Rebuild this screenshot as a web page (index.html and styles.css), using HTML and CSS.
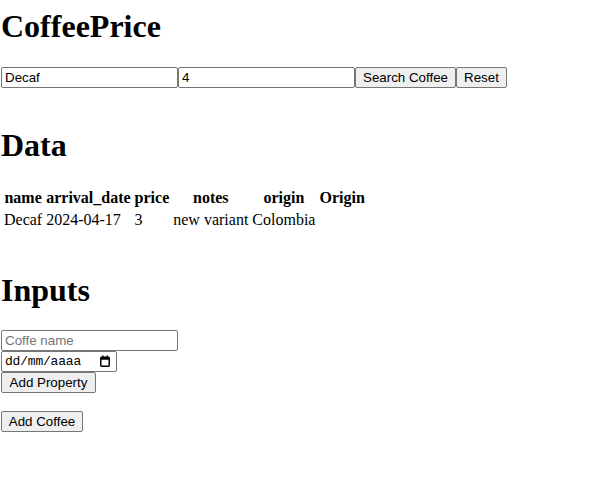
FILE: index.html
```html
<!DOCTYPE html>
<html lang="en">
<head>
<meta charset="utf-8">
<title>CoffeePrice</title>
<link rel="stylesheet" href="styles.css">
</head>
<body>
<div class="app">
  <section class="section section-search">
    <h1 class="title first">CoffeePrice</h1>
    <form class="search-row">
      <input class="text-input" type="text" value="Decaf">
      <input class="text-input" type="text" value="4">
      <button class="btn btn-search" type="button">Search Coffee</button>
      <button class="btn btn-reset" type="button">Reset</button>
    </form>
  </section>

  <section class="section">
    <h1 class="title">Data</h1>
    <table class="data-table">
      <thead>
        <tr>
          <th>name</th>
          <th>arrival_date</th>
          <th>price</th>
          <th>notes</th>
          <th>origin</th>
          <th>Origin</th>
        </tr>
      </thead>
      <tbody>
        <tr>
          <td>Decaf</td>
          <td>2024-04-17</td>
          <td>3</td>
          <td>new variant</td>
          <td>Colombia</td>
          <td></td>
        </tr>
      </tbody>
    </table>
  </section>

  <section class="section">
    <h1 class="title">Inputs</h1>
    <div class="input-stack">
      <input class="text-input" type="text" placeholder="Coffe name">
      <div class="date-input">
        <span class="date-text">dd/mm/aaaa</span>
        <svg class="cal-icon" width="10" height="12" viewBox="0 0 10 12" aria-hidden="true">
          <rect x="0.75" y="2.25" width="8.5" height="9" rx="1" fill="none" stroke="#000" stroke-width="1.5"/>
          <rect x="0.75" y="2.25" width="8.5" height="2.5" fill="#000"/>
          <rect x="2" y="0.5" width="1.5" height="2.5" fill="#000"/>
          <rect x="6.5" y="0.5" width="1.5" height="2.5" fill="#000"/>
        </svg>
      </div>
      <button class="btn btn-prop" type="button">Add Property</button>
      <button class="btn btn-add" type="button">Add Coffee</button>
    </div>
  </section>
</div>
</body>
</html>
```

FILE: styles.css
```css
html, body {
  margin: 0;
  padding: 0;
  background: #ffffff;
}

body {
  font-family: "Liberation Serif", "Times New Roman", serif;
  font-size: 16px;
  color: #000;
}

.app {
  padding: 0 1px;
}

.section {
  padding-bottom: 18.4px;
}

.section-search {
  padding-bottom: 17.6px;
}

.title {
  font-family: "Liberation Serif", "Times New Roman", serif;
  font-size: 32px;
  font-weight: bold;
  margin: 21.44px 0;
  line-height: normal;
}

.title.first {
  margin-top: 8px;
}

.search-row {
  display: flex;
  margin: 0;
  padding-top: 0.8px;
}

.text-input {
  box-sizing: border-box;
  width: 177px;
  height: 21px;
  margin: 0;
  padding: 1px 3px;
  border: 1px solid #767676;
  border-radius: 2px;
  background: #fff;
  color: #000;
  font-family: "Liberation Sans", Arial, sans-serif;
  font-size: 13.33px;
  outline: none;
}

.text-input::placeholder {
  color: #757575;
}

.btn {
  box-sizing: border-box;
  height: 21px;
  margin: 0;
  padding: 0 6px;
  border: 1px solid #767676;
  border-radius: 2px;
  background: #efefef;
  color: #000;
  font-family: "Liberation Sans", Arial, sans-serif;
  font-size: 13.33px;
  white-space: nowrap;
}

.btn-search { width: 101px; }
.btn-reset { width: 51px; }
.btn-prop { width: 95px; }
.btn-add { width: 82px; margin-top: 18px; }

.data-table {
  border-collapse: separate;
  border-spacing: 2px;
  font-size: 16px;
}

.data-table th,
.data-table td {
  padding: 1px;
}

.data-table th {
  font-weight: bold;
  text-align: center;
}

.data-table td {
  text-align: left;
}

.input-stack {
  display: flex;
  flex-direction: column;
  align-items: flex-start;
}

.date-input {
  box-sizing: border-box;
  width: 116px;
  height: 21px;
  display: flex;
  align-items: center;
  justify-content: space-between;
  padding: 0 6px 0 3px;
  border: 1px solid #767676;
  border-radius: 2px;
  background: #fff;
}

.date-text {
  font-family: "Liberation Mono", "DejaVu Sans Mono", monospace;
  font-size: 13px;
  color: #000;
  letter-spacing: -0.2px;
}

.cal-icon {
  display: block;
}
```
